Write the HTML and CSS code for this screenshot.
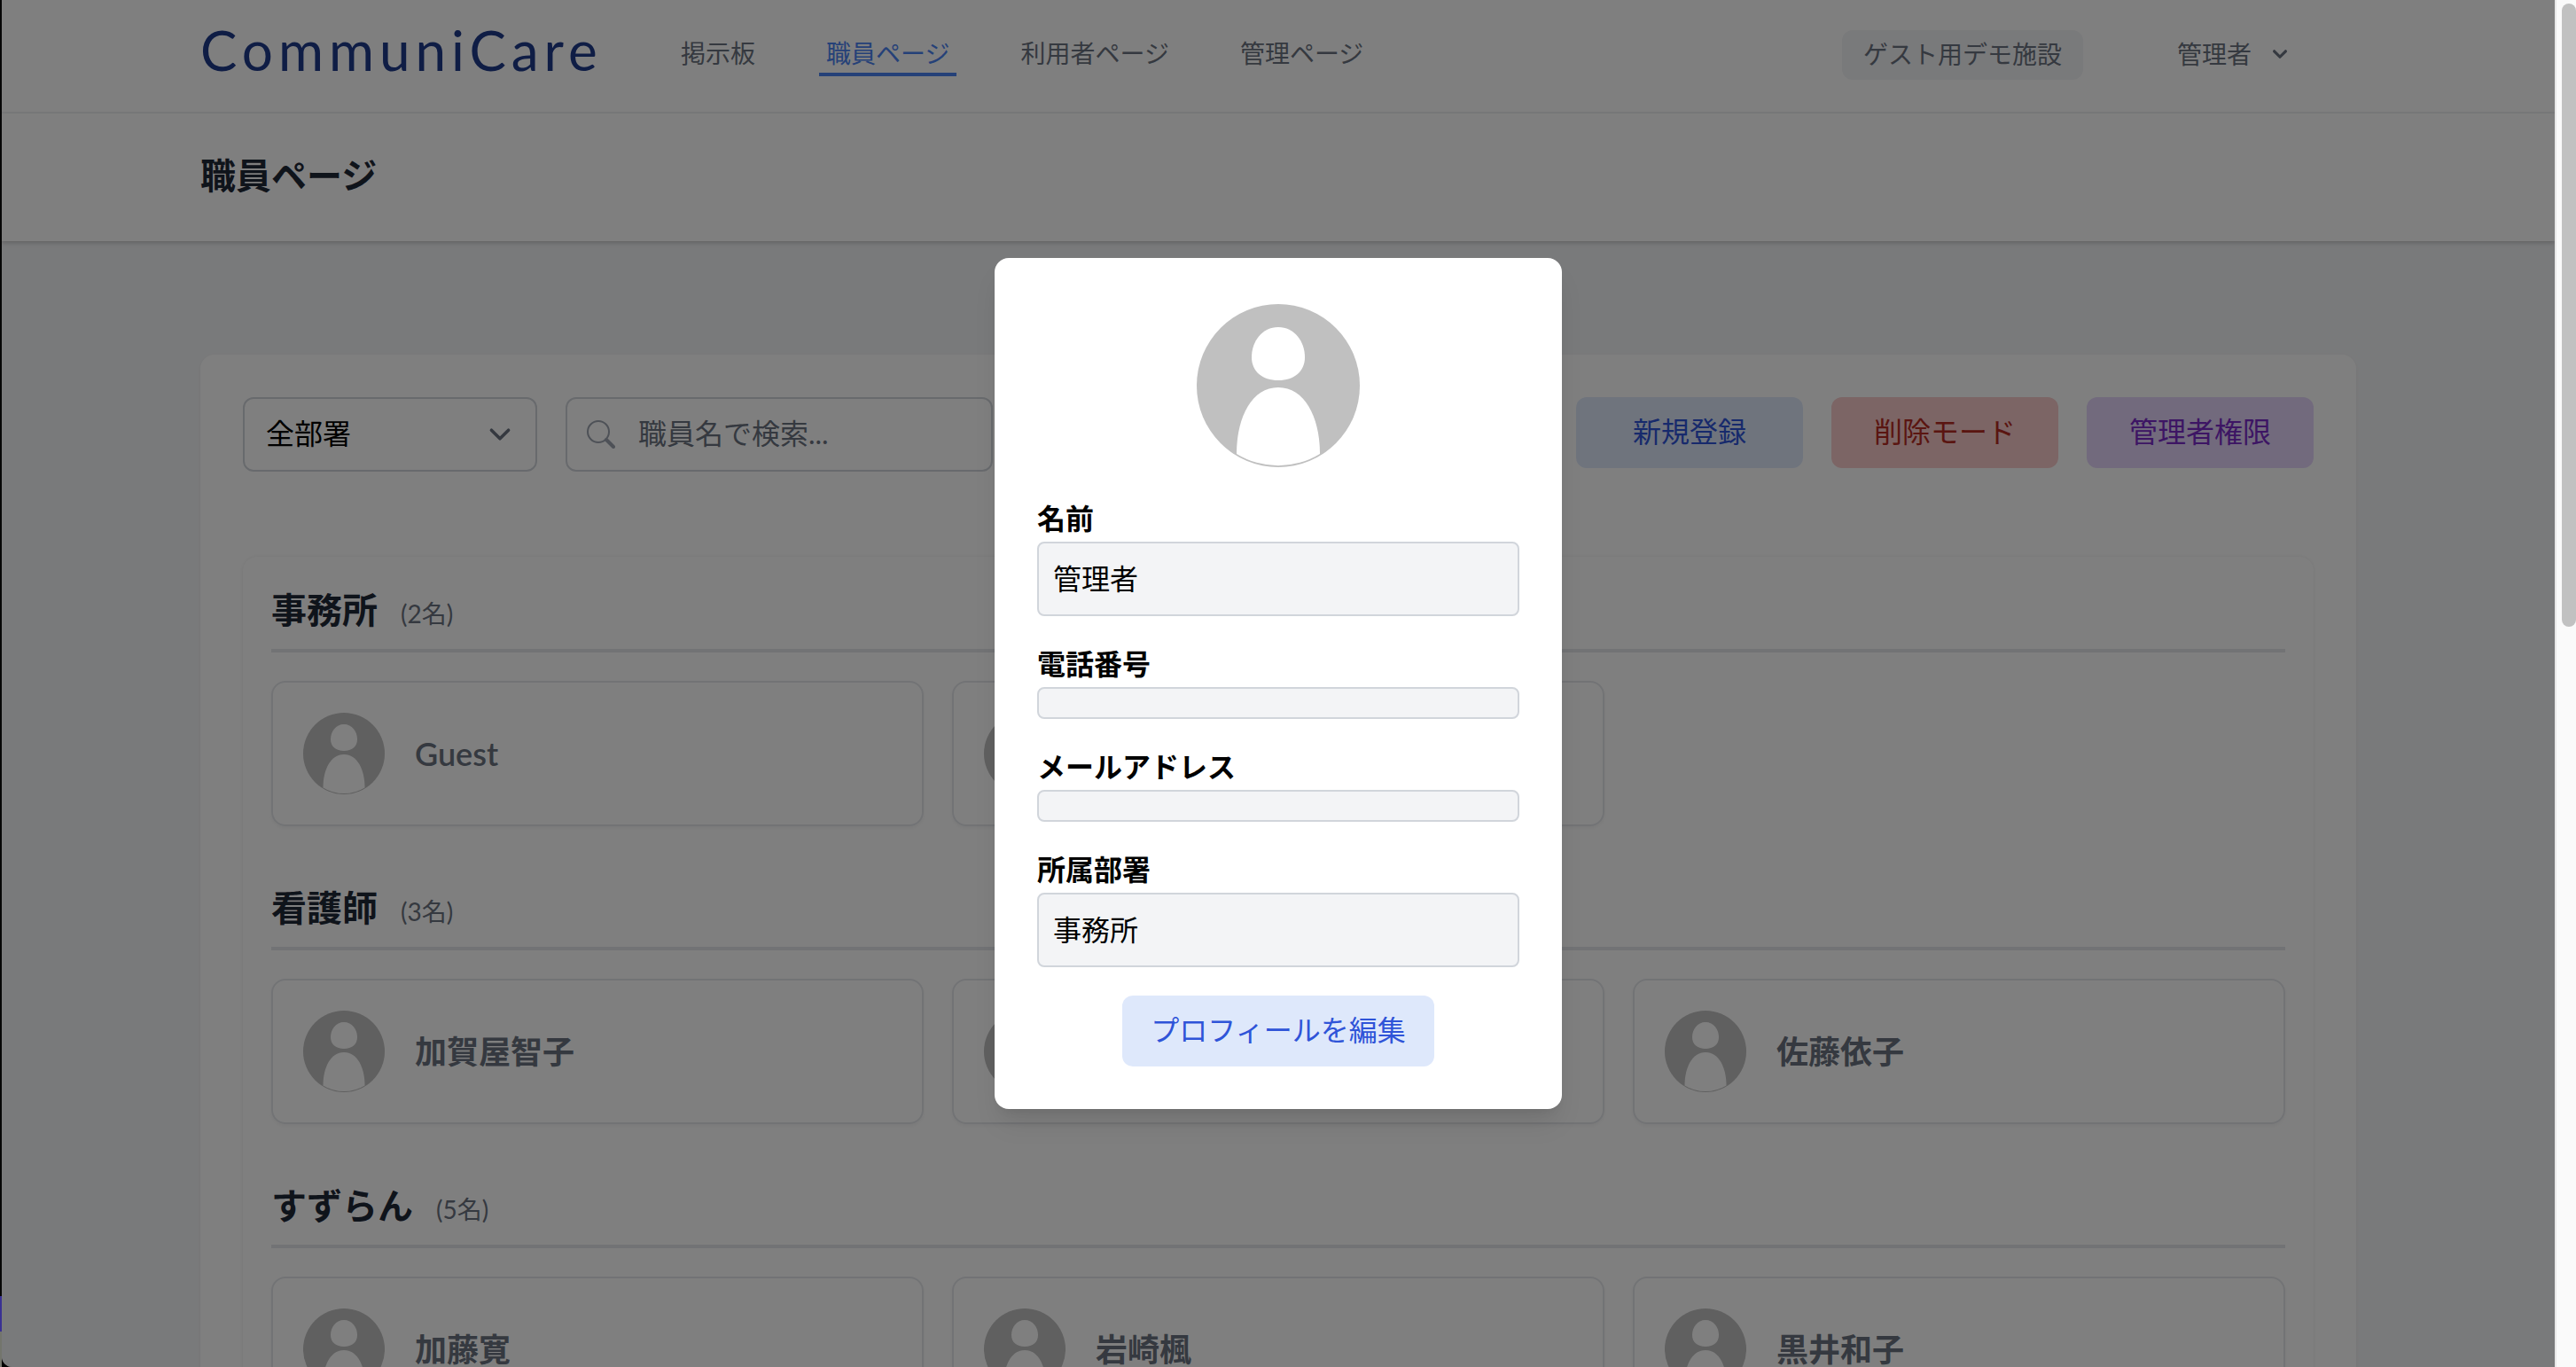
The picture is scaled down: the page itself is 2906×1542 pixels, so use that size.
FILE: index.html
```html
<!DOCTYPE html>
<html lang="ja">
<head>
<meta charset="utf-8">
<meta name="viewport" content="width=device-width, initial-scale=1">
<title>職員ページ</title>
<link rel="stylesheet" href="styles.css">
</head>
<body>
<svg class="defs" aria-hidden="true">
  <symbol id="avatar" viewBox="0 0 96 96">
    <circle cx="48" cy="48" r="46" fill="#c0c0c0"/>
    <path fill="#fff" d="M48 15C57 15 63 23 63 32C63 40 57 45 48 45C39 45 33 40 33 32C33 23 39 15 48 15Z"/>
    <path fill="#fff" d="M48 49C63 49 71.500 66 71.500 86.500A45 45 0 0 1 24.500 86.500C24.500 66 33 49 48 49Z"/>
  </symbol>
</svg>
<div class="screen">
  <div class="edge"></div>
  <div class="window">
    <nav class="topbar">
      <div class="container topbar-row">
        <a class="logo" href="#">CommuniCare</a>
        <div class="links">
          <a class="link" href="#">掲示板</a>
          <a class="link link-active" href="#">職員ページ</a>
          <a class="link" href="#">利用者ページ</a>
          <a class="link" href="#">管理ページ</a>
        </div>
        <span class="facility">ゲスト用デモ施設</span>
        <button class="user" type="button">管理者
          <svg class="user-icon" viewBox="0 0 20 20" fill="currentColor"><path fill-rule="evenodd" d="M5.293 7.293a1 1 0 011.414 0L10 10.586l3.293-3.293a1 1 0 111.414 1.414l-4 4a1 1 0 01-1.414 0l-4-4a1 1 0 010-1.414z" clip-rule="evenodd"/></svg>
        </button>
      </div>
    </nav>
    <header class="heading">
      <div class="container"><h1 class="title">職員ページ</h1></div>
    </header>
    <main class="container main">
      <div class="board">
        <div class="tools">
          <select class="select" aria-label="部署"><option>全部署</option></select>
          <label class="search">
            <svg class="search-icon" viewBox="0 0 32 32" fill="none" stroke="currentColor"><circle cx="13" cy="13" r="12" stroke-width="2"/><path d="M22 22l8 8" stroke-width="4" stroke-linecap="round"/></svg>
            <input class="search-input" type="text" placeholder="職員名で検索..." aria-label="職員名で検索">
          </label>
          <div class="actions">
            <button class="btn btn-blue" type="button">新規登録</button>
            <button class="btn btn-red" type="button">削除モード</button>
            <button class="btn btn-purple" type="button">管理者権限</button>
          </div>
        </div>
        <div class="panel">
          <section class="unit">
            <h2 class="unit-head">事務所<span class="count">(2名)</span></h2>
            <div class="cards">
              <div class="card"><svg class="face"><use href="#avatar"/></svg>Guest</div>
              <div class="card"><svg class="face"><use href="#avatar"/></svg></div>
            </div>
          </section>
          <section class="unit">
            <h2 class="unit-head">看護師<span class="count">(3名)</span></h2>
            <div class="cards">
              <div class="card"><svg class="face"><use href="#avatar"/></svg>加賀屋智子</div>
              <div class="card"><svg class="face"><use href="#avatar"/></svg></div>
              <div class="card"><svg class="face"><use href="#avatar"/></svg>佐藤依子</div>
            </div>
          </section>
          <section class="unit">
            <h2 class="unit-head">すずらん<span class="count">(5名)</span></h2>
            <div class="cards">
              <div class="card"><svg class="face"><use href="#avatar"/></svg>加藤寛</div>
              <div class="card"><svg class="face"><use href="#avatar"/></svg>岩崎楓</div>
              <div class="card"><svg class="face"><use href="#avatar"/></svg>黒井和子</div>
            </div>
          </section>
        </div>
      </div>
    </main>
    <div class="overlay">
      <div class="modal" role="dialog" aria-label="プロフィール">
        <svg class="portrait"><use href="#avatar"/></svg>
        <div class="field">
          <label class="label" for="name">名前</label>
          <input class="value" id="name" type="text" value="管理者" readonly>
        </div>
        <div class="field">
          <label class="label" for="tel">電話番号</label>
          <input class="value value-empty" id="tel" type="text" readonly>
        </div>
        <div class="field">
          <label class="label" for="mail">メールアドレス</label>
          <input class="value value-empty" id="mail" type="text" readonly>
        </div>
        <div class="field">
          <label class="label" for="unit">所属部署</label>
          <input class="value" id="unit" type="text" value="事務所" readonly>
        </div>
        <button class="btn btn-edit" type="button">プロフィールを編集</button>
      </div>
    </div>
  </div>
  <div class="scrollbar"><div class="thumb"></div></div>
</div>
</body>
</html>
```
FILE: styles.css
```css
* { box-sizing: border-box; }
body {
  margin: 0;
  font-family: Lato, "Noto Sans CJK JP", sans-serif;
  font-size: 32px;
  line-height: 48px;
  color: #000;
}
button, input, select { font: inherit; color: inherit; }
.defs { display: none; }

.screen { display: flex; height: 100vh; overflow: hidden; background: #000; }
.edge { width: 2px; background: linear-gradient(#060606 94.800%, #3a3193 94.800% 97.400%, #73756c 97.400%); }
.window {
  position: relative;
  flex: 1;
  min-width: 0;
  overflow: hidden;
  background: #f3f4f6;
  border-bottom-left-radius: 12px;
}
.scrollbar { width: 24px; padding: 4px 0 0 6px; background: #fafafa; border-left: 2px solid #e8e8e8; }
.thumb { height: calc(46% - 4px); background: #c1c1c1; border-radius: 8px; }

.container { max-width: 2560px; margin: 0 auto; padding: 0 64px; }

.topbar { background: #fff; border-bottom: 2px solid #f3f4f6; }
.topbar-row { display: flex; align-items: center; height: 126px; padding-bottom: 2px; font-size: 28px; color: #6b7280; }
.logo { width: 454px; padding-bottom: 12px; font-size: 62px; line-height: 64px; letter-spacing: 6px; color: #1e3a8a; text-decoration: none; }
.links { display: flex; gap: 64px; margin-left: 80px; }
.link { padding: 0 8px; line-height: 44px; color: inherit; text-decoration: none; border-bottom: 4px solid transparent; }
.link-active { color: #4b82f0; border-color: #4b82f0; }
.facility { margin-left: auto; padding: 3px 24px 5px; background: #f3f4f6; border-radius: 12px; }
.user { display: flex; align-items: center; gap: 16px; margin: 0 38px 0 74px; padding: 0 32px 2px; border: 0; background: none; }
.user-icon { width: 32px; height: 32px; }

.heading { position: relative; background: #fff; padding: 46px 0 50px; box-shadow: 0 2px 6px rgba(0, 0, 0, .1), 0 2px 4px rgba(0, 0, 0, .1); }
.title { margin: 0; font-size: 40px; line-height: 48px; font-weight: 600; color: #1f2937; }

.main { margin-top: 128px; }
.board { padding: 48px; background: #fff; border-radius: 16px; box-shadow: 0 2px 4px rgba(0, 0, 0, .05); }
.tools { display: flex; align-items: flex-start; gap: 32px; }
.select {
  width: 332px;
  height: 84px;
  padding: 0 24px 2px;
  border: 2px solid #d1d5db;
  border-radius: 12px;
  appearance: none;
  background: #fff url("data:image/svg+xml,%3Csvg xmlns='http://www.w3.org/2000/svg' viewBox='0 0 20 20' fill='none' stroke='%236b7280' stroke-width='1.5' stroke-linecap='round' stroke-linejoin='round'%3E%3Cpath d='M6 8l4 4 4-4'/%3E%3C/svg%3E") right 16px center / 48px 48px no-repeat;
}
.search { display: flex; align-items: center; gap: 26px; width: 482px; height: 84px; padding: 0 22px; border: 2px solid #d1d5db; border-radius: 12px; }
.search-icon { flex: none; width: 32px; height: 32px; color: #9ca3af; }
.search-input { flex: 1; min-width: 0; height: 52px; padding: 0 0 4px; border: 0; outline: 0; background: none; }
.search-input::placeholder { color: #6b7280; opacity: 1; }
.actions { display: flex; gap: 32px; margin-left: auto; }
.btn { width: 256px; height: 80px; padding: 0 0 2px; border: 0; border-radius: 12px; }
.btn-blue { background: #dee8fb; color: #2f54d8; }
.btn-red { background: #f8caca; color: #b42b22; }
.btn-purple { background: #e4d5fa; color: #7a2ac8; }

.panel { margin-top: 96px; padding: 32px; border-radius: 16px; box-shadow: 0 0 4px rgba(0, 0, 0, .08); }
.unit { margin-bottom: 64px; }
.unit-head {
  margin: 0 0 32px;
  padding-bottom: 16px;
  font-size: 40px;
  line-height: 56px;
  font-weight: 700;
  color: #1f2937;
  border-bottom: 4px solid #e5e7eb;
}
.count { margin-left: 26px; font-size: 28px; line-height: 28px; font-weight: 400; color: #6b7280; }
.cards { display: grid; grid-template-columns: repeat(3, 1fr); gap: 32px; }
.card {
  display: flex;
  align-items: center;
  gap: 32px;
  padding: 32px;
  font-size: 36px;
  font-weight: 600;
  color: #6b7280;
  border: 2px solid #e5e7eb;
  border-radius: 16px;
  box-shadow: 0 2px 4px rgba(0, 0, 0, .05);
}
.face { flex: none; width: 96px; height: 96px; }

.overlay {
  position: absolute;
  inset: 0;
  display: flex;
  align-items: center;
  justify-content: center;
  background: rgba(0, 0, 0, .5);
}
.modal {
  display: flex;
  flex-direction: column;
  gap: 32px;
  width: 640px;
  padding: 48px;
  background: #fff;
  border-radius: 16px;
  box-shadow: 0 20px 30px -6px rgba(0, 0, 0, .1), 0 8px 12px -8px rgba(0, 0, 0, .1);
}
.portrait { width: 192px; height: 192px; align-self: center; }
.field { display: flex; flex-direction: column; }
.label { padding-bottom: 4px; line-height: 44px; font-weight: 700; }
.value { width: 100%; height: 84px; padding: 0 16px 4px; background: #f3f4f6; border: 2px solid #d1d5db; border-radius: 8px; outline: 0; }
.value-empty { height: 36px; }
.btn-edit { width: auto; padding: 0 32px 2px; align-self: center; background: #dee8fb; color: #2f54d8; }
```
